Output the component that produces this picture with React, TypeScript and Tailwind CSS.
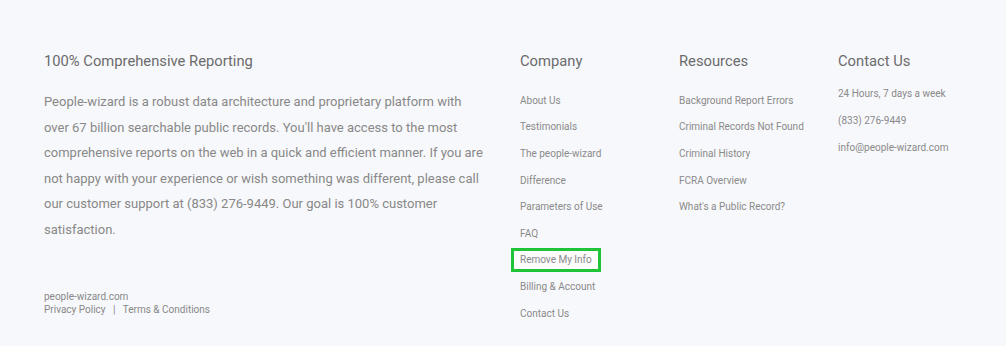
const company = [
  "About Us",
  "Testimonials",
  "The people-wizard",
  "Difference",
  "Parameters of Use",
  "FAQ",
  "Remove My Info",
  "Billing & Account",
  "Contact Us",
];

const resources = [
  "Background Report Errors",
  "Criminal Records Not Found",
  "Criminal History",
  "FCRA Overview",
  "What's a Public Record?",
];

const contact = ["24 Hours, 7 days a week", "(833) 276-9449", "info@people-wizard.com"];

export default function App() {
  return (
    <div
      className="w-[1006px] h-[346px] bg-[#f7f8fb] flex pl-[44px] pt-[51px] overflow-hidden"
      style={{ fontFamily: "Roboto, 'Liberation Sans', sans-serif" }}
    >
      {/* Left: about blurb */}
      <div className="w-[476px] flex flex-col">
        <h3 className="text-[14.75px] leading-[20px] text-[#6b6b6b]">
          100% Comprehensive Reporting
        </h3>
        <p className="mt-[18px] w-[442px] text-[13px] leading-[25.5px] text-[#888]">
          People-wizard is a robust data architecture and proprietary platform with over 67 billion
          searchable public records. You'll have access to the most comprehensive reports on the web
          in a quick and efficient manner. If you are not happy with your experience or wish
          something was different, please call our customer support at (833) 276-9449. Our goal is
          100% customer satisfaction.
        </p>
        <div className="mt-[48px] text-[10px] leading-[13px] text-[#888]">
          <div>people-wizard.com</div>
          <div>
            Privacy Policy <span className="mx-[5px]">|</span> Terms &amp; Conditions
          </div>
        </div>
      </div>

      {/* Company */}
      <div className="w-[159px]">
        <h3 className="text-[14.75px] leading-[20px] text-[#6b6b6b]">Company</h3>
        <ul className="mt-[16px] text-[10px] text-[#8a8a8a]">
          {company.map((item) =>
            item === "Remove My Info" ? (
              <li key={item} className="h-[26.6px] flex items-center">
                <span className="-ml-[9px] border-[3px] border-[#1fc337] bg-[#fbfbfb] px-[6px] h-[24px] flex items-center">
                  {item}
                </span>
              </li>
            ) : (
              <li key={item} className="h-[26.6px] flex items-center">
                {item}
              </li>
            )
          )}
        </ul>
      </div>

      {/* Resources */}
      <div className="w-[159px]">
        <h3 className="text-[14.75px] leading-[20px] text-[#6b6b6b]">Resources</h3>
        <ul className="mt-[16px] text-[10px] text-[#8a8a8a]">
          {resources.map((item) => (
            <li key={item} className="h-[26.6px] flex items-center">
              {item}
            </li>
          ))}
        </ul>
      </div>

      {/* Contact */}
      <div className="w-[159px]">
        <h3 className="text-[14.75px] leading-[20px] text-[#6b6b6b]">Contact Us</h3>
        <ul className="mt-[9px] text-[10px] text-[#8a8a8a]">
          {contact.map((item) => (
            <li key={item} className="h-[27px] flex items-center">
              {item}
            </li>
          ))}
        </ul>
      </div>
    </div>
  );
}
